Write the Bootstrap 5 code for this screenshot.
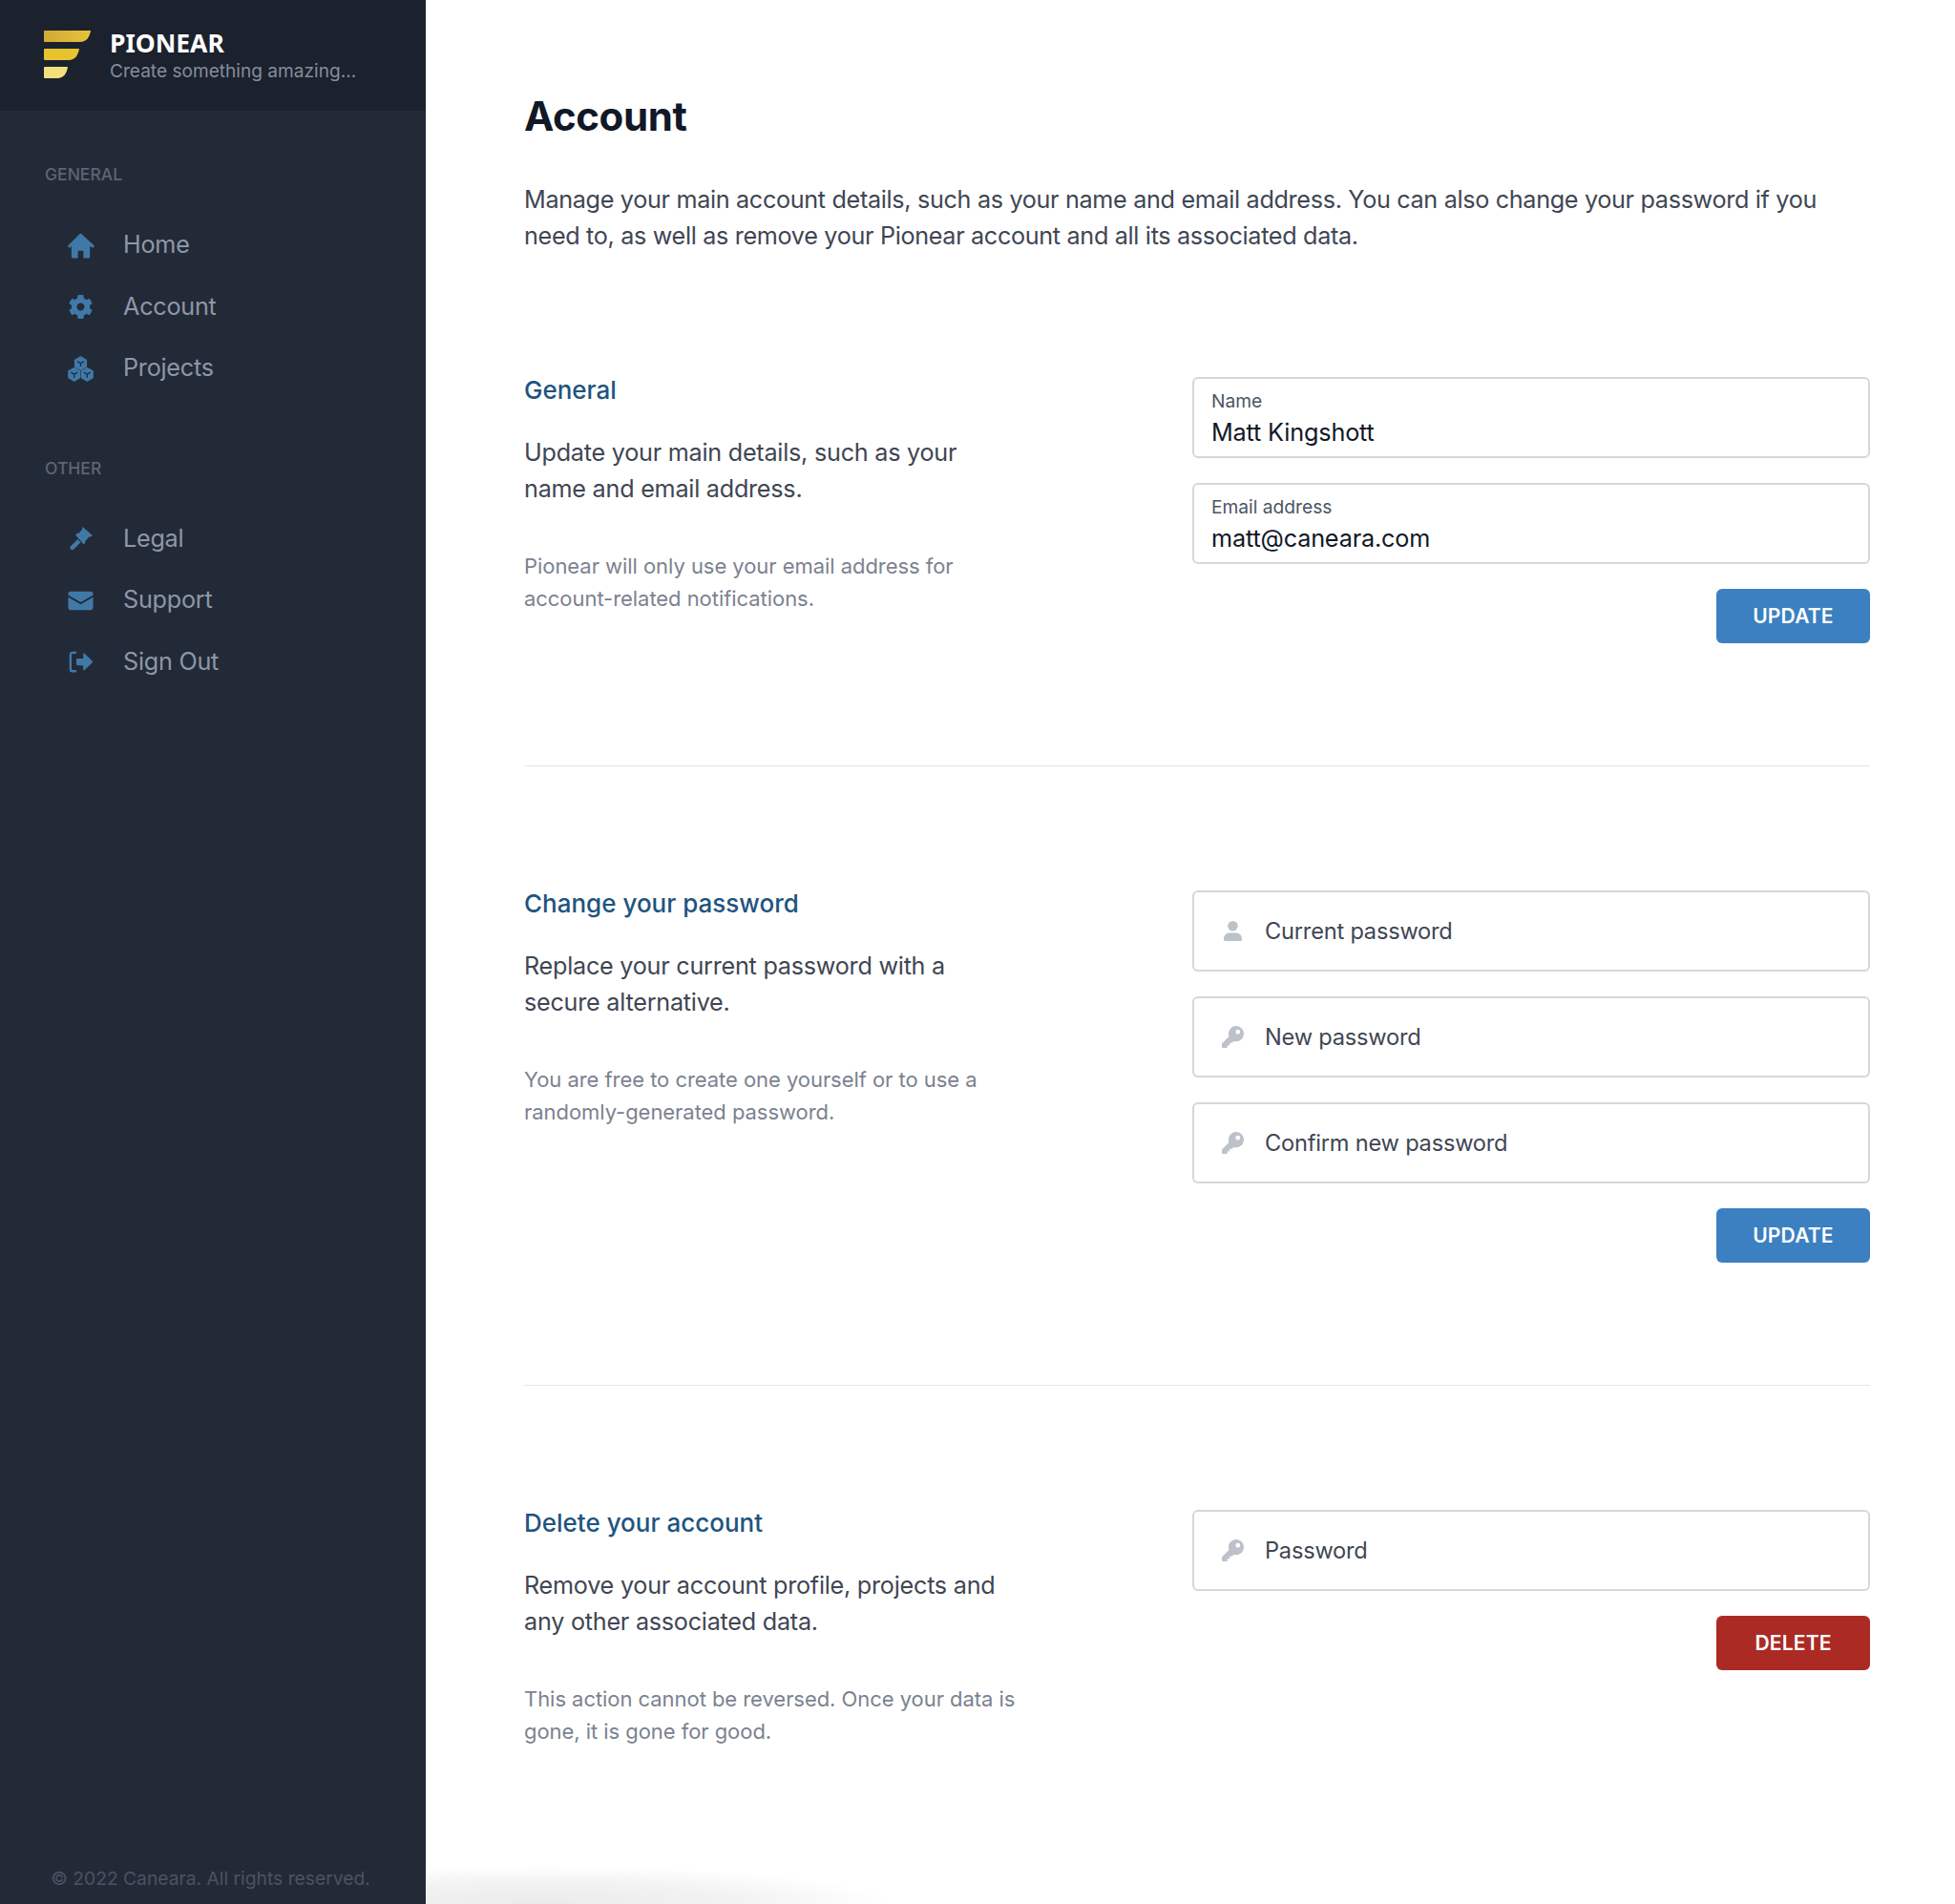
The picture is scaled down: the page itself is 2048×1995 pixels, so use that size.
<!DOCTYPE html>
<html lang="en">
<head>
    <meta charset="UTF-8">
    <meta name="viewport" content="width=device-width, initial-scale=1.0">
    <title>Pionear - Account</title>
    <link href="https://cdn.jsdelivr.net/npm/bootstrap@5.3.3/dist/css/bootstrap.min.css" rel="stylesheet">
    <style>
        body {
            font-family: Inter, "Liberation Sans", sans-serif;
            background: #fff;
            min-height: 1995px;
            overflow-x: hidden;
        }
        .side-bar {
            width: 446px;
            flex-shrink: 0;
            min-height: 1995px;
            background: #232a37;
        }
        .brand-bar {
            height: 116px;
            background: #1b212d;
            padding: 32px 0 0 46px;
        }
        .brand-bar svg { width: 50px; height: 50px; margin-right: 19px; }
        .brand-name {
            font-family: "Noto Sans", sans-serif;
            font-weight: 700;
            font-size: 26.5px;
            line-height: 26px;
            color: #fff;
        }
        .brand-tag { font-size: 19.1px; line-height: 30px; padding-top: 1px; color: #858d9c; }
        .nav-title {
            font-size: 17.5px;
            line-height: 24px;
            font-weight: 500;
            color: #5d6574;
            padding-left: 47px;
            margin-bottom: 30px;
        }
        .side-nav { margin-bottom: 60px; }
        .side-nav .nav-link {
            display: flex;
            align-items: center;
            height: 64.5px;
            padding: 0 0 0 70px;
            font-size: 25.2px;
            letter-spacing: -0.25px;
            color: #8d97a8;
        }
        .side-nav .nav-link svg { width: 29px; height: 29px; margin-right: 30px; flex-shrink: 0; fill: #4079a8; }
        .side-foot {
            margin-top: auto;
            padding: 0 5px 14px 0;
            text-align: center;
            font-size: 19.25px;
            line-height: 26px;
            color: #4c5362;
        }
        .main-area { flex: 1; padding: 96px 89px 0 103px; position: relative; min-width: 0; }
        .page-title {
            font-size: 42px;
            line-height: 52px;
            font-weight: 700;
            letter-spacing: -0.4px;
            color: #111827;
            margin-bottom: 42px;
        }
        .page-intro { font-size: 25.2px; line-height: 38.4px; letter-spacing: -0.33px; color: #3f4653; margin-bottom: 128px; }
        .acct-block { display: flex; justify-content: space-between; }
        .acct-block + .acct-block { border-top: 1px solid #e5e7eb; margin-top: 128px; padding-top: 130px; }
        .block-text { width: 530px; }
        .block-title { font-size: 26px; line-height: 30px; margin-top: -1px; font-weight: 500; color: #1f5480; margin-bottom: 31px; }
        .block-desc { font-size: 25.2px; line-height: 38.4px; letter-spacing: -0.25px; color: #3f4653; margin-bottom: 44px; }
        .block-note { font-size: 22px; line-height: 34px; letter-spacing: -0.05px; color: #7b8290; margin-bottom: 0; }
        .block-form { width: 710px; flex-shrink: 0; }
        .form-floating.field-box { margin-bottom: 26px; }
        .form-floating.field-box > .form-control {
            height: 85px;
            min-height: 85px;
            padding: 39px 18px 8px;
            font-size: 25.2px;
            line-height: 36px;
            letter-spacing: -0.15px;
            color: #111827;
            border: 2px solid #d4d7dd;
            border-radius: 6px;
        }
        .form-floating.field-box > .form-control:not(:placeholder-shown) ~ label {
            padding: 13px 20px;
            font-size: 19.2px;
            height: auto;
            line-height: 24px;
            color: #4b5563;
            border: 0;
            opacity: 1;
            transform: none;
        }
        .field-icon.input-group { margin-bottom: 26px; height: 85px; }
        .field-icon .input-group-text {
            width: 77px;
            justify-content: center;
            padding: 0 0 0 6px;
            background: #fff;
            border: 2px solid #d4d7dd;
            border-right: 0;
            border-radius: 6px 0 0 6px;
        }
        .field-icon svg { width: 23px; height: 23px; fill: #bcc1ca; }
        .field-icon .form-control {
            padding: 0;
            font-size: 23.6px;
            letter-spacing: -0.2px;
            color: #3f4653;
            border: 2px solid #d4d7dd;
            border-left: 0;
            border-radius: 0 6px 6px 0;
            box-shadow: none;
        }
        .field-icon .form-control::placeholder { color: #3f4653; opacity: 1; }
        .act-btn {
            width: 161px;
            height: 57px;
            padding: 0;
            font-size: 21px;
            font-weight: 600;
            letter-spacing: 0.2px;
            color: #fff;
            border: 0;
            border-radius: 6px;
        }
        .act-update, .act-update:hover { background: #3c80c1; color: #fff; }
        .act-delete, .act-delete:hover { background: #ab2b24; color: #fff; }
        .foot-shadow {
            position: absolute;
            left: 0;
            bottom: 0;
            width: 490px;
            height: 40px;
            background: radial-gradient(ellipse 75% 100% at 25% 100%, rgba(0,0,0,.08), rgba(0,0,0,.05) 55%, rgba(0,0,0,0) 100%);
            pointer-events: none;
        }
    </style>
</head>
<body>
    <div class="d-flex">
        <aside class="side-bar d-flex flex-column">
            <div class="brand-bar d-flex align-items-start">
                <svg viewBox="0 0 50 50">
                    <defs>
                        <linearGradient id="bar1" x1="0" x2="1" y1="0" y2="0"><stop offset="0" stop-color="#d2aa33"/><stop offset="1" stop-color="#e6c23c"/></linearGradient>
                    </defs>
                    <path fill="url(#bar1)" d="M1 0H49C48 7 44.500 12 38 12H1A1 1 0 0 1 0 11V1A1 1 0 0 1 1 0Z"/>
                    <path fill="#e6c32f" d="M1 19H37C36 26 32.500 31 26 31H1A1 1 0 0 1 0 30V20A1 1 0 0 1 1 19Z"/>
                    <path fill="#f2e07f" d="M1 38H25C24 45 20.500 50 14 50H1A1 1 0 0 1 0 49V39A1 1 0 0 1 1 38Z"/>
                </svg>
                <div>
                    <div class="brand-name">PIONEAR</div>
                    <div class="brand-tag">Create something amazing...</div>
                </div>
            </div>

            <div class="nav-title" style="margin-top:55px">GENERAL</div>
            <nav class="nav flex-column side-nav">
                <a class="nav-link" href="#">
                    <svg viewBox="0 0 30 28"><path d="M13.600 1.500a2 2 0 0 1 2.800 0l12.900 12a1.500 1.500 0 0 1-2 2.200L25 14.500V26a1.500 1.500 0 0 1-1.500 1.500H19a1 1 0 0 1-1-1v-6a1 1 0 0 0-1-1h-4a1 1 0 0 0-1 1v6a1 1 0 0 1-1 1H6.500A1.500 1.500 0 0 1 5 26V14.500l-1.300 1.200a1.500 1.500 0 0 1-2-2.200z"/></svg>
                    Home
                </a>
                <a class="nav-link" href="#">
                    <svg viewBox="-32 -32 576 576"><path d="M487.400 315.700l-42.600-24.600c4.300-23.200 4.300-47 0-70.200l42.600-24.600c4.900-2.800 7.100-8.600 5.500-14-11.100-35.600-30-67.800-54.700-94.600-3.800-4.100-10-5.100-14.800-2.300L380.800 110c-17.900-15.400-38.500-27.300-60.800-35.100V25.800c0-5.600-3.900-10.500-9.400-11.700-36.700-8.200-74.300-7.800-109.200 0-5.500 1.200-9.400 6.100-9.400 11.700V75c-22.200 7.900-42.800 19.800-60.800 35.100L88.700 85.500c-4.900-2.800-11-1.900-14.800 2.300-24.700 26.700-43.600 58.900-54.700 94.600-1.700 5.400.6 11.200 5.500 14L67.300 221c-4.300 23.200-4.300 47 0 70.200l-42.600 24.600c-4.900 2.800-7.100 8.600-5.500 14 11.100 35.600 30 67.800 54.700 94.600 3.800 4.100 10 5.100 14.800 2.300l42.600-24.600c17.900 15.400 38.500 27.300 60.800 35.100v49.200c0 5.600 3.900 10.500 9.400 11.700 36.700 8.200 74.300 7.800 109.200 0 5.500-1.200 9.400-6.100 9.400-11.700v-49.200c22.200-7.900 42.800-19.800 60.800-35.100l42.600 24.600c4.900 2.800 11 1.900 14.800-2.300 24.700-26.700 43.600-58.900 54.700-94.600 1.500-5.500-.7-11.300-5.600-14.100zM256 336c-44.100 0-80-35.900-80-80s35.900-80 80-80 80 35.900 80 80-35.900 80-80 80z"/></svg>
                    Account
                </a>
                <a class="nav-link" href="#">
                    <svg viewBox="0 0 30 28">
                        <g stroke="#4079a8" stroke-width="1.500" stroke-linejoin="round">
                            <polygon points="15,1 21,4.500 21,11.500 15,15 9,11.500 9,4.500"/>
                            <polygon points="8,13 14,16.500 14,23.500 8,27 2,23.500 2,16.500"/>
                            <polygon points="22,13 28,16.500 28,23.500 22,27 16,23.500 16,16.500"/>
                        </g>
                        <path fill="none" stroke="#232a37" stroke-width="1.400" d="M11.500 5.800L15 8l3.500-2.200M15 8v3.500M4.500 17.800L8 20l3.500-2.200M8 20v3.500M18.500 17.800L22 20l3.500-2.200M22 20v3.500"/>
                    </svg>
                    Projects
                </a>
            </nav>

            <div class="nav-title">OTHER</div>
            <nav class="nav flex-column side-nav">
                <a class="nav-link" href="#">
                    <svg viewBox="-2 -1 32 30">
                        <path d="M15.500 1.500l11 9.500-2 2-1.500-.5-5 5.500.5 1.500-2 2-9.500-11 2-2 1.500.5 4.500-5-.5-1.500z" transform="translate(1 -1)"/>
                        <path d="M10.500 14.500l3.500 3.500-8 8a2.400 2.400 0 0 1-3.500-3.500z"/>
                    </svg>
                    Legal
                </a>
                <a class="nav-link" href="#">
                    <svg viewBox="-1 -1 30 30">
                        <path d="M3 4h22a2.500 2.500 0 0 1 2.500 2.500v1.200L14 15.500.5 7.700V6.500A2.500 2.500 0 0 1 3 4z"/>
                        <path d="M.5 10l13.500 7.800L27.500 10v11.500A2.500 2.500 0 0 1 25 24H3a2.500 2.500 0 0 1-2.500-2.500z"/>
                    </svg>
                    Support
                </a>
                <a class="nav-link" href="#">
                    <svg viewBox="-2 -1 32 30">
                        <path d="M9 2v2.500H5A1.500 1.500 0 0 0 3.500 6v16A1.500 1.500 0 0 0 5 23.500h4V26H4.500A3.500 3.500 0 0 1 1 22.500v-17A3.500 3.500 0 0 1 4.500 2z"/>
                        <path d="M17 5a1 1 0 0 1 1.600-.7l8.700 8.500a1.500 1.500 0 0 1 0 2.200l-8.700 8.500a1 1 0 0 1-1.600-.7V18h-6.500A1.500 1.500 0 0 1 9 16.500v-5A1.500 1.500 0 0 1 10.500 10H17z"/>
                    </svg>
                    Sign Out
                </a>
            </nav>

            <div class="side-foot">© 2022 Caneara. All rights reserved.</div>
        </aside>

        <main class="main-area">
            <h1 class="page-title">Account</h1>
            <p class="page-intro">Manage your main account details, such as your name and email address. You can also change your password if you need to, as well as remove your Pionear account and all its associated data.</p>

            <section class="acct-block">
                <div class="block-text">
                    <h2 class="block-title">General</h2>
                    <p class="block-desc">Update your main details, such as your<br>name and email address.</p>
                    <p class="block-note">Pionear will only use your email address for account-related notifications.</p>
                </div>
                <form class="block-form">
                    <div class="form-floating field-box">
                        <input type="text" class="form-control" id="fieldName" value="Matt Kingshott">
                        <label for="fieldName">Name</label>
                    </div>
                    <div class="form-floating field-box">
                        <input type="email" class="form-control" id="fieldEmail" value="matt@caneara.com">
                        <label for="fieldEmail">Email address</label>
                    </div>
                    <div class="d-flex justify-content-end">
                        <button type="button" class="btn act-btn act-update">UPDATE</button>
                    </div>
                </form>
            </section>

            <section class="acct-block">
                <div class="block-text">
                    <h2 class="block-title">Change your password</h2>
                    <p class="block-desc">Replace your current password with a<br>secure alternative.</p>
                    <p class="block-note">You are free to create one yourself or to use a randomly-generated password.</p>
                </div>
                <form class="block-form">
                    <div class="input-group field-icon">
                        <span class="input-group-text"><svg viewBox="0 0 24 24"><circle cx="12" cy="6.500" r="5.500"/><path d="M2 21c0-5 3.500-7 7-7h6c3.500 0 7 2 7 7v.5a1.500 1.500 0 0 1-1.500 1.500h-17A1.500 1.500 0 0 1 2 21.500z"/></svg></span>
                        <input type="password" class="form-control" placeholder="Current password">
                    </div>
                    <div class="input-group field-icon">
                        <span class="input-group-text"><svg viewBox="0 0 24 24"><path fill-rule="evenodd" d="M15.500 0a8.500 8.500 0 1 1-2.600 16.600L11 18.500H8.500V21H6v2.200a.8.800 0 0 1-.8.800H1a1 1 0 0 1-1-1v-3.200a1 1 0 0 1 .3-.7l7.500-7.500A8.500 8.500 0 0 1 15.500 0zm2 4a2.500 2.500 0 1 0 0 5 2.500 2.500 0 0 0 0-5z"/></svg></span>
                        <input type="password" class="form-control" placeholder="New password">
                    </div>
                    <div class="input-group field-icon">
                        <span class="input-group-text"><svg viewBox="0 0 24 24"><path fill-rule="evenodd" d="M15.500 0a8.500 8.500 0 1 1-2.600 16.600L11 18.500H8.500V21H6v2.200a.8.800 0 0 1-.8.800H1a1 1 0 0 1-1-1v-3.200a1 1 0 0 1 .3-.7l7.500-7.500A8.500 8.500 0 0 1 15.500 0zm2 4a2.500 2.500 0 1 0 0 5 2.500 2.500 0 0 0 0-5z"/></svg></span>
                        <input type="password" class="form-control" placeholder="Confirm new password">
                    </div>
                    <div class="d-flex justify-content-end">
                        <button type="button" class="btn act-btn act-update">UPDATE</button>
                    </div>
                </form>
            </section>

            <section class="acct-block">
                <div class="block-text">
                    <h2 class="block-title">Delete your account</h2>
                    <p class="block-desc">Remove your account profile, projects and<br>any other associated data.</p>
                    <p class="block-note">This action cannot be reversed. Once your data is gone, it is gone for good.</p>
                </div>
                <form class="block-form">
                    <div class="input-group field-icon">
                        <span class="input-group-text"><svg viewBox="0 0 24 24"><path fill-rule="evenodd" d="M15.500 0a8.500 8.500 0 1 1-2.600 16.600L11 18.500H8.500V21H6v2.200a.8.800 0 0 1-.8.800H1a1 1 0 0 1-1-1v-3.200a1 1 0 0 1 .3-.7l7.500-7.500A8.500 8.500 0 0 1 15.500 0zm2 4a2.500 2.500 0 1 0 0 5 2.500 2.500 0 0 0 0-5z"/></svg></span>
                        <input type="password" class="form-control" placeholder="Password">
                    </div>
                    <div class="d-flex justify-content-end">
                        <button type="button" class="btn act-btn act-delete">DELETE</button>
                    </div>
                </form>
            </section>

            <div class="foot-shadow"></div>
        </main>
    </div>
    <script src="https://cdn.jsdelivr.net/npm/bootstrap@5.3.3/dist/js/bootstrap.bundle.min.js"></script>
</body>
</html>
